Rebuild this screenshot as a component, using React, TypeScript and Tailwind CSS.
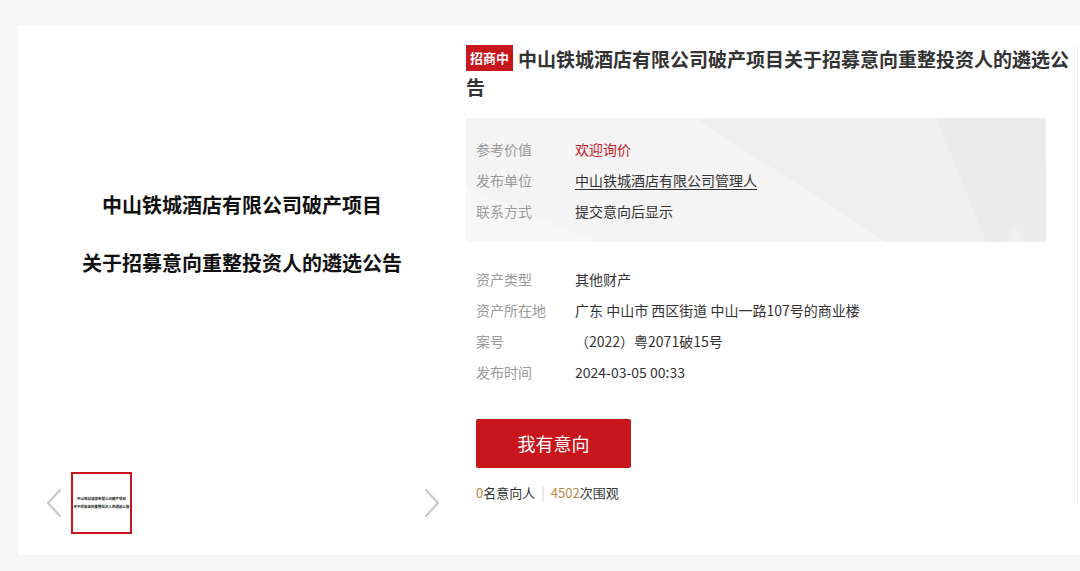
import React from "react";

const infoRows = [
  { label: "参考价值", value: "欢迎询价", tone: "red" },
  { label: "发布单位", value: "中山铁城酒店有限公司管理人", tone: "link" },
  { label: "联系方式", value: "提交意向后显示", tone: "plain" },
];

const detailRows = [
  { label: "资产类型", value: "其他财产" },
  { label: "资产所在地", value: "广东 中山市 西区街道 中山一路107号的商业楼" },
  { label: "案号", value: "（2022）粤2071破15号" },
  { label: "发布时间", value: "2024-03-05 00:33" },
];

function Chevron({ dir }: { dir: "left" | "right" }) {
  return (
    <svg width="18" height="30" viewBox="0 0 18 30" fill="none" className="shrink-0">
      <path
        d={dir === "left" ? "M15 2 L3 15 L15 28" : "M3 2 L15 15 L3 28"}
        stroke="#c9c9c9"
        strokeWidth="2.2"
        strokeLinecap="round"
        strokeLinejoin="round"
      />
    </svg>
  );
}

export default function App() {
  return (
    <div className="h-[571px] w-[1080px] overflow-hidden bg-[#f6f6f6] font-['Microsoft_YaHei','Noto_Sans_CJK_SC',sans-serif] text-[#333]">
      <div className="ml-[18px] mt-[26px] flex h-[529px] w-[1062px] bg-white">
        {/* left: preview */}
        <div className="flex w-[448px] shrink-0 flex-col">
          <div className="flex h-[416px] flex-col items-center justify-center gap-[38px] text-[20px] font-bold leading-[20px] text-[#111]">
            <p>中山铁城酒店有限公司破产项目</p>
            <p>关于招募意向重整投资人的遴选公告</p>
          </div>
          <div className="mt-[30px] flex items-center pl-[27px] pr-[25px]">
            <Chevron dir="left" />
            <div className="ml-[8px] flex h-[62px] w-[61px] flex-col items-center justify-center gap-[4px] border-2 border-[#c8161d] text-[3.5px] font-bold leading-[4px] text-[#222]">
              <p>中山铁城酒店有限公司破产项目</p>
              <p>关于招募意向重整投资人的遴选公告</p>
            </div>
            <div className="flex-1" />
            <Chevron dir="right" />
          </div>
        </div>

        {/* right: info */}
        <div className="w-[611px] shrink-0 pt-[19px]">
          <h1 className="text-[19px] font-bold leading-[28px] text-[#333]">
            <span className="mr-[5px] inline-block h-[26px] bg-[#c8161d] px-[4px] align-top text-[13px] leading-[26px] text-white">
              招商中
            </span>
            中山铁城酒店有限公司破产项目关于招募意向重整投资人的遴选公告
          </h1>

          <div className="relative mt-[17px] h-[124px] w-[580px] overflow-hidden bg-[#ececec] pl-[10px] pt-[16px]">
            <svg className="absolute inset-0" width="580" height="124" viewBox="0 0 580 124">
              <polygon points="0,0 230,0 420,124 0,124" fill="#f4f4f4" />
              <polygon points="230,0 470,0 560,124 420,124" fill="#efefef" />
              <polygon points="470,0 580,0 580,40 540,124 520,124" fill="#ebebeb" />
              <polygon points="0,70 130,124 0,124" fill="#f7f7f7" />
            </svg>
            <div className="relative">
              {infoRows.map((r) => (
                <div key={r.label} className="flex text-[14px] leading-[31px]">
                  <span className="w-[99px] shrink-0 text-[#999]">{r.label}</span>
                  <span
                    className={
                      r.tone === "red"
                        ? "text-[#c8161d]"
                        : r.tone === "link"
                        ? "text-[#333] underline underline-offset-[3px]"
                        : "text-[#333]"
                    }
                  >
                    {r.value}
                  </span>
                </div>
              ))}
            </div>
          </div>

          <div className="mt-[22px] pl-[10px]">
            {detailRows.map((r) => (
              <div key={r.label} className="flex text-[14px] leading-[31px]">
                <span className="w-[99px] shrink-0 text-[#999]">{r.label}</span>
                <span className="text-[#333]">{r.value}</span>
              </div>
            ))}

            <button className="mt-[31px] flex h-[49px] w-[155px] items-center justify-center rounded-[2px] bg-[#c8161d] text-[18px] text-white">
              我有意向
            </button>

            <p className="mt-[15px] text-[13px] leading-[20px] text-[#333]">
              <span className="text-[#b8893f]">0</span>名意向人
              <span className="mx-[6px] text-[#ccc]">|</span>
              <span className="text-[#b8893f]">4502</span>次围观
            </p>
          </div>
        </div>

        <div className="mb-[52px] mt-[19px] w-px bg-[#ececec]" />
      </div>
    </div>
  );
}
